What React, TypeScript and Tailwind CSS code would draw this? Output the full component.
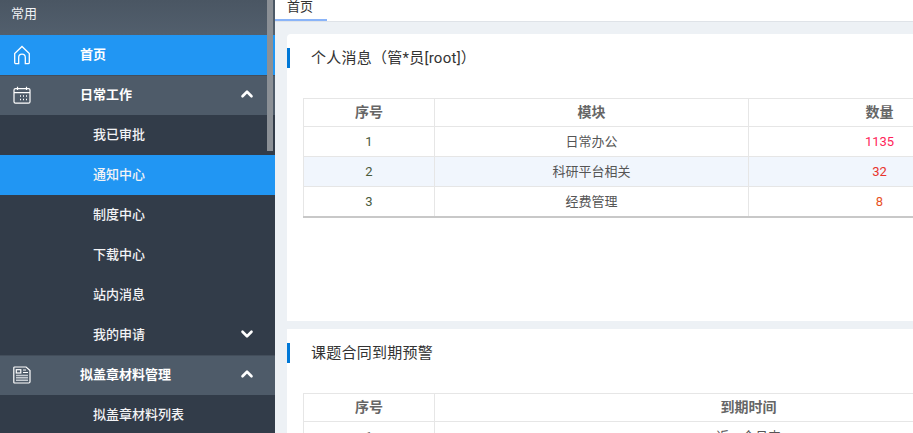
import { ChevronDown, ChevronUp } from 'lucide-react'

function HomeIcon() {
  return (
    <svg width="18" height="20" viewBox="0 0 18 20" fill="none" stroke="white" strokeWidth="1.3">
      <path d="M1.7 8.500 9 1.500l7.300 7v9a1.200 1.200 0 0 1-1.200 1.200h-2.800V12.500a3.300 3.300 0 0 0-6.600 0v6.200H2.900a1.200 1.200 0 0 1-1.200-1.200z" />
    </svg>
  )
}

function CalendarIcon() {
  return (
    <svg width="18" height="18" viewBox="0 0 18 18" fill="none" stroke="white" strokeWidth="1.2">
      <rect x="1" y="2.600" width="16" height="14.600" rx="1.500" />
      <path d="M1 6.600h16M4.500 0.800v3.200M13.500 0.800v3.200" />
      <path d="M7 10h1M10 10h1M13 10h1M7 13.500h1M10 13.500h1M13 13.500h1" strokeWidth="1.300" />
    </svg>
  )
}

function PaperIcon() {
  return (
    <svg width="18" height="18" viewBox="0 0 18 18" fill="none" stroke="white" strokeWidth="1.2">
      <path d="M1.600 1h11.500L17 4.500v11.300a1.200 1.200 0 0 1-1.200 1.200H1.600a0.800 0.800 0 0 1-0.800-0.800V1.800a0.800 0.800 0 0 1 0.800-0.800z" />
      <rect x="3.300" y="3.700" width="4.500" height="3.300" />
      <path d="M10 4h3M10 6.500h5" strokeWidth="1" />
      <path d="M3 9.500h12M3 11.800h12M3 14.200h12" strokeWidth="1.500" stroke="#c5cbd1" />
    </svg>
  )
}

function GroupRow({ icon, label, active, chevron }: { icon: React.ReactNode; label: string; active?: boolean; chevron?: boolean }) {
  return (
    <div className={`flex h-10 items-center pl-[13px] pr-[19px] text-[13px] font-bold text-white ${active ? 'bg-[#2196f3]' : 'bg-[#4e5b69] shadow-[inset_0_1px_0_#434e5b]'}`}>
      <span className="flex w-[18px] justify-center">{icon}</span>
      <span className="ml-[49px] flex-1 pb-[1px]">{label}</span>
      {chevron && <ChevronUp size={18} strokeWidth={3.5} className="mb-[2px] text-white" />}
    </div>
  )
}

function SubRow({ label, active, down }: { label: string; active?: boolean; down?: boolean }) {
  return (
    <div className={`flex h-10 items-center pl-[93px] pr-[19px] text-[13px] font-medium text-[#f2f3f5] ${active ? 'bg-[#2196f3]' : 'bg-[#323c49]'}`}>
      <span className="flex-1 pb-[1px]">{label}</span>
      {down && <ChevronDown size={18} strokeWidth={3.5} className="mb-[2px] text-white" />}
    </div>
  )
}

function Sidebar() {
  return (
    <aside className="relative h-full w-[275px] shrink-0 overflow-hidden bg-[#323c49]">
      <div className="flex h-[35px] items-center bg-gradient-to-b from-[#4a5663] to-[#525f6d] pb-[7px] pl-[11px] text-[13px] text-[#f2f3f5]">常用</div>
      <GroupRow icon={<HomeIcon />} label="首页" active />
      <GroupRow icon={<CalendarIcon />} label="日常工作" chevron />
      <SubRow label="我已审批" />
      <SubRow label="通知中心" active />
      <SubRow label="制度中心" />
      <SubRow label="下载中心" />
      <SubRow label="站内消息" />
      <SubRow label="我的申请" down />
      <GroupRow icon={<PaperIcon />} label="拟盖章材料管理" chevron />
      <SubRow label="拟盖章材料列表" />
      {/* scrollbar thumb */}
      <div className="absolute right-[2px] top-0 h-[151px] w-[6px] bg-[#8b9096]" />
    </aside>
  )
}

function Cell({ children, className = '' }: { children: React.ReactNode; className?: string }) {
  return <td className={`border border-[#e6e6e6] p-0 text-center ${className}`}>{children}</td>
}

function HeadCell({ children }: { children: React.ReactNode }) {
  return <th className="h-[28px] border border-[#e6e6e6] p-0 text-center text-[14px] font-bold text-[#666666]">{children}</th>
}

const messages = [
  { no: 1, name: '日常办公', count: '1135', color: 'text-[#ff1f5a]' },
  { no: 2, name: '科研平台相关', count: '32', color: 'text-[#e8342c]' },
  { no: 3, name: '经费管理', count: '8', color: 'text-[#e8521f]' },
]

function SectionTitle({ children }: { children: React.ReactNode }) {
  return (
    <div className="flex h-5 items-center border-l-[3px] border-[#0078d7] pl-[21px] text-[15px] tracking-[0.25px] text-[#333333]">
      {children}
    </div>
  )
}

export default function App() {
  return (
    <div
      className="flex h-[433px] w-[913px] overflow-hidden bg-[#edf1f5]"
      style={{ fontFamily: 'Roboto, "Noto Sans CJK SC", sans-serif' }}
    >
      <Sidebar />
      <main className="min-w-0 flex-1 overflow-hidden">
        <div className="h-[22px] border-b border-[#dfe3e8] bg-white">
          <div className="h-[21px] w-[52px] border-b-2 border-[#8ab4f8] pl-3 text-[13px] leading-[14px] text-[#333333]">首页</div>
        </div>
        <div className="flex w-[800px] flex-col gap-2 pl-3 pt-3">
          <section className="h-[287px] rounded-tl-sm bg-white pt-[14px]">
            <SectionTitle>个人消息（管*员[root]）</SectionTitle>
            <div className="pl-4 pt-[30px]">
              <table className="w-[707px] table-fixed border-collapse border-b-2 border-[#c8c8c8] text-[13px]">
                <colgroup>
                  <col className="w-[131px]" />
                  <col className="w-[314px]" />
                  <col className="w-[262px]" />
                </colgroup>
                <thead>
                  <tr>
                    <HeadCell>序号</HeadCell>
                    <HeadCell>模块</HeadCell>
                    <HeadCell>数量</HeadCell>
                  </tr>
                </thead>
                <tbody>
                  {messages.map((m) => (
                    <tr key={m.no} className={`h-[30px] ${m.no === 2 ? 'bg-[#f1f6fd]' : 'bg-white'}`}>
                      <Cell className="text-[#4a5a3c]">{m.no}</Cell>
                      <Cell className="text-[#555555]">{m.name}</Cell>
                      <Cell className={m.color}>{m.count}</Cell>
                    </tr>
                  ))}
                </tbody>
              </table>
            </div>
          </section>
          <section className="h-[200px] bg-white pt-[14px]">
            <SectionTitle>课题合同到期预警</SectionTitle>
            <div className="pl-4 pt-[30px]">
              <table className="w-[759px] table-fixed border-collapse text-[13px]">
                <colgroup>
                  <col className="w-[131px]" />
                  <col className="w-[628px]" />
                </colgroup>
                <thead>
                  <tr>
                    <HeadCell>序号</HeadCell>
                    <HeadCell>到期时间</HeadCell>
                  </tr>
                </thead>
                <tbody>
                  <tr className="h-[30px]">
                    <Cell className="text-[#555555]">1</Cell>
                    <Cell className="text-[#555555]">近一个月内</Cell>
                  </tr>
                </tbody>
              </table>
            </div>
          </section>
        </div>
      </main>
    </div>
  )
}
